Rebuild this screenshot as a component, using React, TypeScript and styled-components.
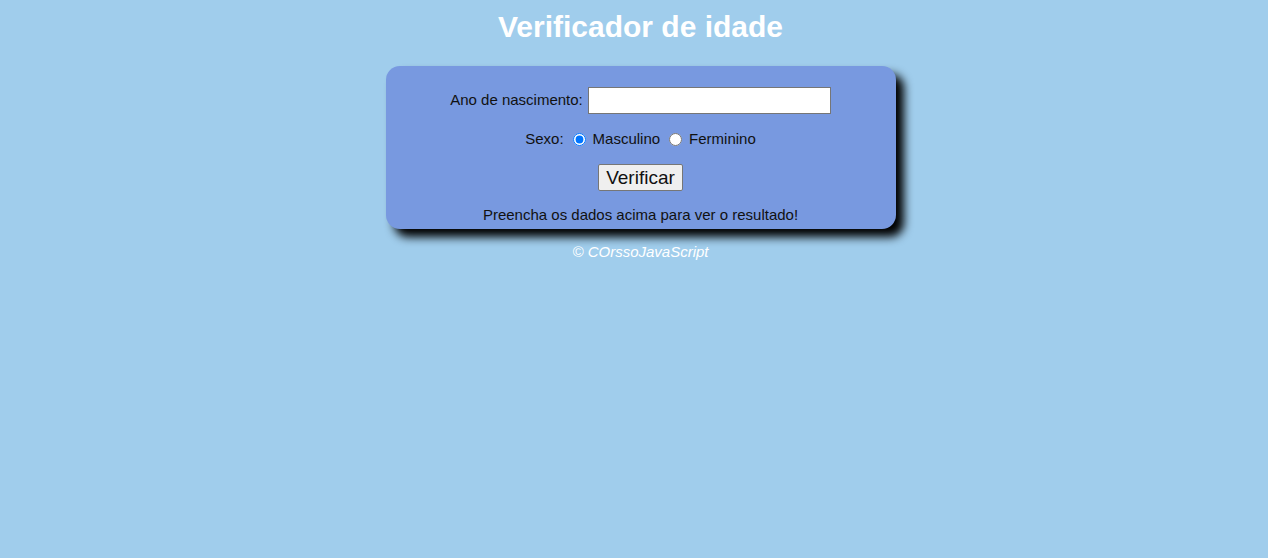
import React from "react";
import styled, { createGlobalStyle } from "styled-components";

const GlobalStyle = createGlobalStyle`
  html, body {
    margin: 0;
    padding: 0;
    background: rgb(160, 205, 236);
    font-family: "Liberation Sans", Arial, sans-serif;
    font-size: 15px;
  }
`;

const Page = styled.div`
  display: flex;
  flex-direction: column;
  align-items: center;
  padding: 10px 0 0 13px;
`;

const Title = styled.h1`
  margin: 0 0 21px;
  font-size: 30px;
  font-weight: bold;
  line-height: 1.15;
  color: #ffffff;
  text-align: center;
`;

const Card = styled.section`
  box-sizing: border-box;
  width: 510px;
  background: rgb(120, 153, 224);
  border-radius: 14px;
  box-shadow: 8px 8px 10px rgba(0, 0, 0, 1);
  padding: 20px 15px 6px;
  display: flex;
  flex-direction: column;
  align-items: center;
  gap: 15px;
  color: #111;
`;

const Row = styled.div<{ $h: number; $pt?: number }>`
  box-sizing: border-box;
  display: flex;
  align-items: center;
  justify-content: center;
  height: ${(p) => p.$h}px;
  padding-top: ${(p) => p.$pt ?? 0}px;
  line-height: 1.15;
`;

const YearInput = styled.input`
  box-sizing: border-box;
  width: 243px;
  height: 27px;
  margin-left: 5px;
  border: 1px solid #767676;
  background: #fff;
  font-size: 15px;
`;

const Radio = styled.input`
  width: 13px;
  height: 13px;
  margin: 0 7px 0 9px;
`;

const Button = styled.button`
  box-sizing: border-box;
  width: 85px;
  height: 27px;
  padding: 2px 6px 0;
  font-family: "Liberation Sans", Arial, sans-serif;
  font-size: 19px;
  color: #111;
  background: #efefef;
  border: 1px solid #767676;
  border-radius: 2px;
`;

const Result = styled.p`
  margin: 0;
  line-height: 1.15;
  text-align: center;
`;

const Footer = styled.footer`
  margin-top: 14px;
  color: #fff;
  font-style: italic;
  line-height: 1.15;
  text-align: center;
`;

export default function App() {
  return (
    <>
      <GlobalStyle />
      <Page>
        <Title>Verificador de idade</Title>
        <Card>
          <Row $h={27} $pt={2}>
            Ano de nascimento:
            <YearInput type="number" />
          </Row>
          <Row $h={21} $pt={2}>
            Sexo:
            <Radio type="radio" name="sexo" defaultChecked />
            Masculino
            <Radio type="radio" name="sexo" />
            Ferminino
          </Row>
          <Button type="button">Verificar</Button>
          <Result>Preencha os dados acima para ver o resultado!</Result>
        </Card>
        <Footer>&copy; COrssoJavaScript</Footer>
      </Page>
    </>
  );
}
